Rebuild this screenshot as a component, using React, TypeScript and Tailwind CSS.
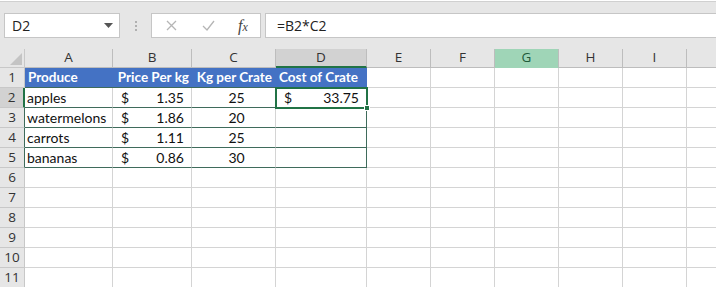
import React from 'react'

const COLS = [
  { key: 'A', w: 'w-[88px]' },
  { key: 'B', w: 'w-[79px]' },
  { key: 'C', w: 'w-[84px]' },
  { key: 'D', w: 'w-[91px]' },
  { key: 'E', w: 'w-[64px]' },
  { key: 'F', w: 'w-[64px]' },
  { key: 'G', w: 'w-[64px]' },
  { key: 'H', w: 'w-[64px]' },
  { key: 'I', w: 'w-[64px]' },
]

type Item = { name: string; price: string; kg: string; cost?: string }

const DATA: Item[] = [
  { name: 'apples', price: '1.35', kg: '25', cost: '33.75' },
  { name: 'watermelons', price: '1.86', kg: '20' },
  { name: 'carrots', price: '1.11', kg: '25' },
  { name: 'bananas', price: '0.86', kg: '30' },
]

const cellFont = "font-['Lato','Liberation_Sans',sans-serif] text-[14px] text-[#111]"
const headFont = "font-['Lato','Liberation_Sans',sans-serif] text-[13.5px] font-bold text-white"

function Money({ value }: { value: string }) {
  return (
    <div className="flex h-full items-center justify-between pl-[8px] pr-[7px]">
      <span>$</span>
      <span>{value}</span>
    </div>
  )
}

function TopBar() {
  return (
    <div className="h-[48px] bg-[#e6e6e6] border-t border-[#d0d0d0] mt-[1px] flex items-start pt-[11px] pl-[4px]">
      {/* name box */}
      <div className="w-[116px] h-[25px] bg-white border border-[#c6c6c6] flex items-center justify-between pl-[7px] pr-[6px] font-['Open_Sans',sans-serif] text-[14px] text-[#222]">
        <span>D2</span>
        <svg width="9" height="6" viewBox="0 0 9 6">
          <path d="M0 0 L9 0 L4.5 5 Z" fill="#555" />
        </svg>
      </div>
      <div className="w-[31px] h-[25px] flex items-center justify-center">
        <div className="flex flex-col gap-[2px]">
          <span className="w-[2px] h-[2px] bg-[#b0b0b0]" />
          <span className="w-[2px] h-[2px] bg-[#b0b0b0]" />
          <span className="w-[2px] h-[2px] bg-[#b0b0b0]" />
        </div>
      </div>
      {/* buttons */}
      <div className="w-[110px] h-[25px] bg-white border border-[#c6c6c6] flex items-center">
        <span className="w-[38px] flex justify-center">
          <svg width="11" height="11" viewBox="0 0 11 11">
            <path d="M1 1 L10 10 M10 1 L1 10" stroke="#b5b5b5" strokeWidth="1.3" />
          </svg>
        </span>
        <span className="w-[36px] flex justify-center">
          <svg width="13" height="11" viewBox="0 0 13 11">
            <path d="M1 6 L5 10 L12 1" stroke="#b5b5b5" strokeWidth="1.3" fill="none" />
          </svg>
        </span>
        <span className="flex-1 flex items-baseline justify-center font-['Liberation_Serif',serif] italic text-[16px] text-[#444] leading-none">
          f<span className="text-[12px]">x</span>
        </span>
      </div>
      {/* formula */}
      <div className="flex-1 ml-[4px] h-[25px] bg-white border border-[#c6c6c6] border-r-0 flex items-center pl-[11px] font-['Open_Sans',sans-serif] text-[14px] text-[#222]">
        =B2*C2
      </div>
    </div>
  )
}

function HeaderRow() {
  return (
    <div className="flex h-[19px] font-['Open_Sans',sans-serif] text-[13.5px] text-[#333]">
      <div className="w-[25px] h-full bg-[#e6e6e6] border-r border-b border-[#c8c8c8] relative">
        <svg className="absolute right-[2px] bottom-[2px]" width="12" height="12" viewBox="0 0 12 12">
          <path d="M12 0 L12 12 L0 12 Z" fill="#c4c4c4" />
        </svg>
      </div>
      {COLS.map((c) => {
        const sel = c.key === 'D'
        const hov = c.key === 'G'
        return (
          <div
            key={c.key}
            className={`${c.w} h-full flex items-center justify-center leading-none border-r ${
              sel
                ? 'bg-[#d2d2d2] border-b-2 border-b-[#217346] border-r-[#bdbdbd]'
                : hov
                  ? 'bg-[#9fd5b7] border-b border-b-[#9fd5b7] border-r-[#bdbdbd] text-[#1e5a3a]'
                  : 'bg-[#e6e6e6] border-b border-[#bdbdbd]'
            }`}
          >
            {c.key}
          </div>
        )
      })}
      <div className="flex-1 h-full bg-[#e6e6e6] border-b border-[#bdbdbd]" />
    </div>
  )
}

function RowHead({ n, sel, inTable }: { n: number; sel?: boolean; inTable?: boolean }) {
  return (
    <div
      className={`w-[25px] h-full flex items-center justify-center font-['Open_Sans',sans-serif] text-[13.5px] text-[#333] border-b border-b-[#c8c8c8] ${
        sel ? 'bg-[#d2d2d2] border-r-2 border-r-[#217346]' : 'bg-[#e6e6e6] border-r'
      } ${!sel && inTable ? 'border-r-[#3f6b5b]' : !sel ? 'border-r-[#c8c8c8]' : ''}`}
    >
      {n}
    </div>
  )
}

function Blanks() {
  return (
    <>
      {COLS.slice(4).map((c) => (
        <div key={c.key} className={`${c.w} h-full border-r border-b border-[#d4d4d4]`} />
      ))}
      <div className="flex-1 h-full border-b border-[#d4d4d4]" />
    </>
  )
}

export default function App() {
  return (
    <div className="w-[716px] h-[287px] overflow-hidden bg-white">
      <TopBar />
      <div className="relative">
        <HeaderRow />

        {/* row 1: table header */}
        <div className="flex h-[20px]">
          <RowHead n={1} />
          <div className={`w-[88px] h-full bg-[#4472c4] border-b border-b-[#3f6b5b] ${headFont} flex items-center pl-[3px]`}>
            Produce
          </div>
          <div className={`w-[79px] h-full bg-[#4472c4] border-b border-b-[#3f6b5b] ${headFont} flex items-center justify-end pr-[3px] whitespace-nowrap`}>
            Price Per kg
          </div>
          <div className={`w-[84px] h-full bg-[#4472c4] border-b border-b-[#3f6b5b] ${headFont} flex items-center justify-end pr-[4px] whitespace-nowrap`}>
            Kg per Crate
          </div>
          <div className={`w-[91px] h-full bg-[#4472c4] border-b border-b-[#3f6b5b] border-r border-r-[#4472c4] ${headFont} flex items-center pl-[3px] whitespace-nowrap`}>
            Cost of Crate
          </div>
          <Blanks />
        </div>

        {DATA.map((d, i) => (
          <div key={d.name} className="flex h-[20px]">
            <RowHead n={i + 2} sel={i === 0} inTable />
            <div className={`w-[88px] h-full border-r border-r-[#d4d4d4] border-b border-b-[#3f6b5b] ${cellFont} flex items-center pl-[2px]`}>
              {d.name}
            </div>
            <div className={`w-[79px] h-full border-r border-r-[#d4d4d4] border-b border-b-[#3f6b5b] ${cellFont}`}>
              <Money value={d.price} />
            </div>
            <div className={`w-[84px] h-full border-r border-r-[#d4d4d4] border-b border-b-[#3f6b5b] ${cellFont} flex items-center justify-center pl-[6px]`}>
              {d.kg}
            </div>
            <div className={`w-[91px] h-full border-r border-r-[#3f6b5b] border-b border-b-[#3f6b5b] ${cellFont}`}>
              {d.cost && <Money value={d.cost} />}
            </div>
            <Blanks />
          </div>
        ))}

        {[6, 7, 8, 9, 10, 11].map((n) => (
          <div key={n} className="flex h-[20px]">
            <RowHead n={n} />
            {COLS.slice(0, 4).map((c) => (
              <div key={c.key} className={`${c.w} h-full border-r border-b border-[#d4d4d4]`} />
            ))}
            <Blanks />
          </div>
        ))}

        {/* active cell D2 */}
        <div className="absolute left-[275px] top-[38px] w-[93px] h-[22px] border-2 border-[#217346] pointer-events-none" />
        <div className="absolute left-[364px] top-[56px] w-[6px] h-[6px] bg-[#217346] border border-white" />
      </div>
    </div>
  )
}
